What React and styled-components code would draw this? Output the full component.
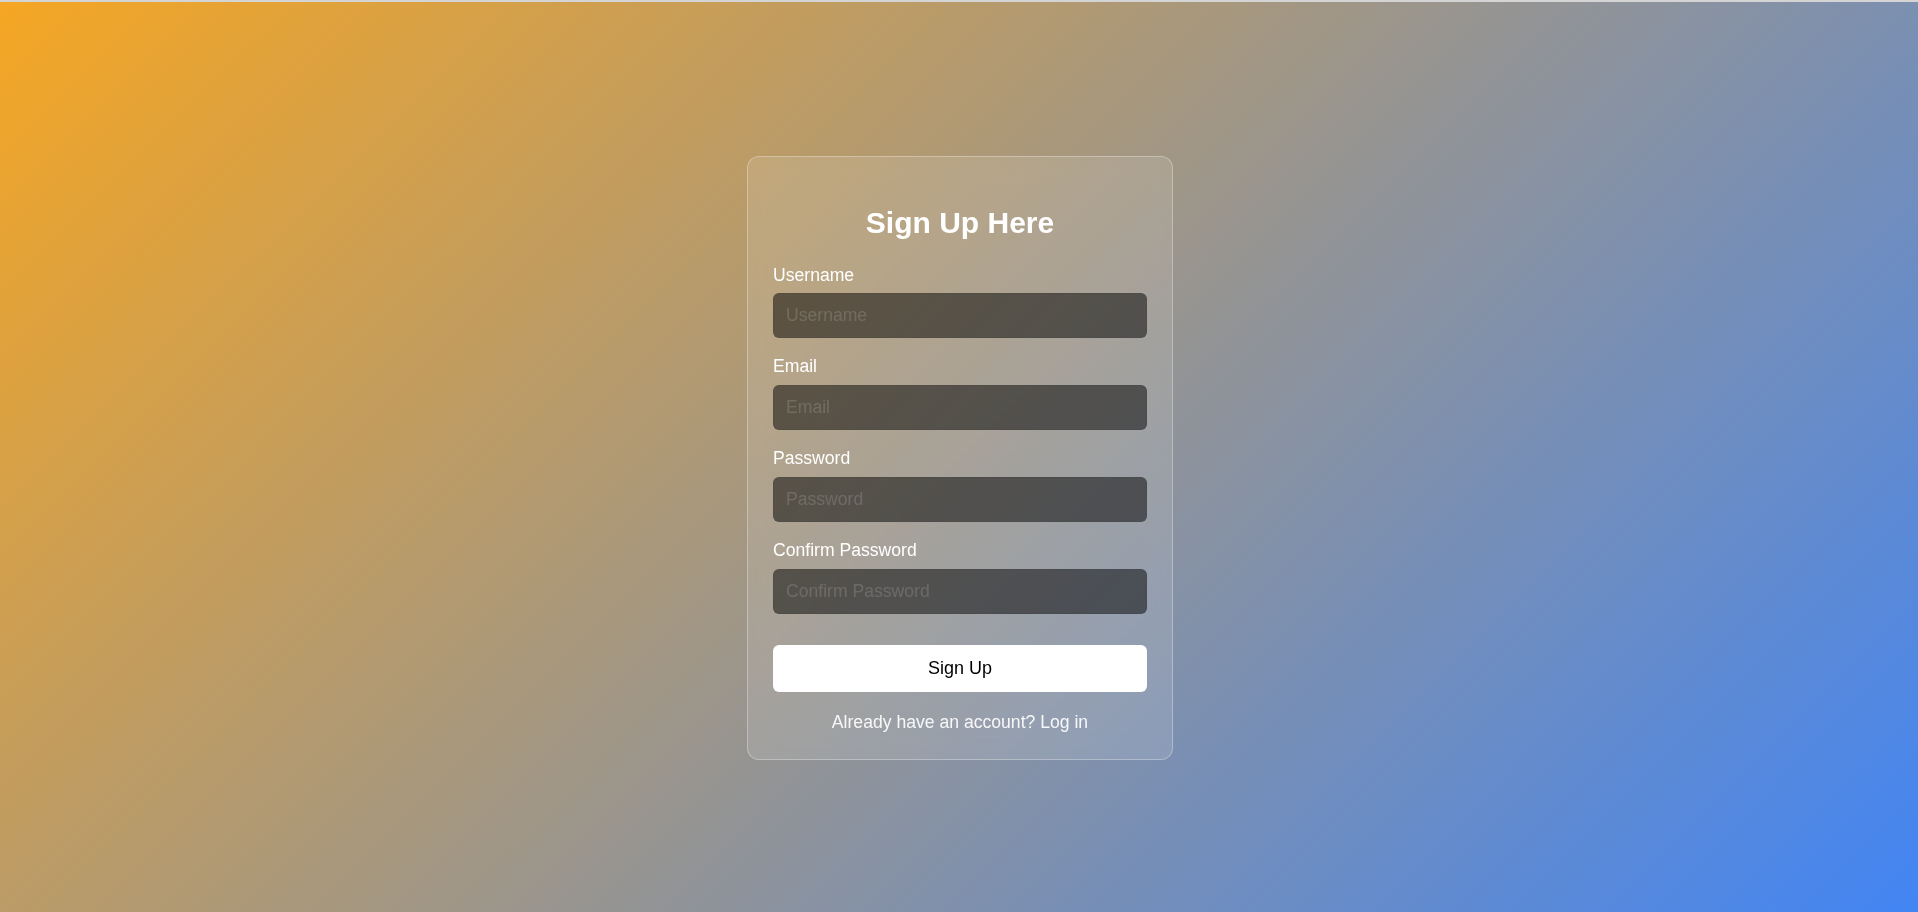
import React from 'react';
import styled, { createGlobalStyle } from 'styled-components';

const GlobalStyle = createGlobalStyle`
  * { box-sizing: border-box; }
  html, body { margin: 0; padding: 0; }
  body { font-family: "Liberation Sans", Arial, sans-serif; }
`;

const Page = styled.div`
  height: 100vh;
  border-top: 2px solid #d4d4d4;
  background: linear-gradient(135deg, #f5a623 0%, #4285f4 100%);
  display: flex;
  align-items: center;
  justify-content: center;
`;

const Card = styled.form`
  width: 426px;
  margin: 2px 0 0 2px;
  padding: 25px 25px 25.6px;
  background: rgba(255, 255, 255, 0.12);
  border: 1px solid rgba(255, 255, 255, 0.3);
  border-radius: 12px;
  backdrop-filter: blur(10px);
`;

const Title = styled.h2`
  margin: 24px 0 24.5px;
  text-align: center;
  color: #fff;
  font-size: 30px;
  font-weight: 700;
`;

const Field = styled.div`
  display: flex;
  flex-direction: column;
  margin-bottom: ${({ $last }) => ($last ? '0' : '18px')};
`;

const Label = styled.label`
  color: #fff;
  font-size: 17.6px;
  margin-bottom: 7.5px;
`;

const Input = styled.input`
  height: 45.4px;
  padding: 0 12px;
  border: 1px solid rgba(0, 0, 0, 0.05);
  border-radius: 6px;
  background: rgba(0, 0, 0, 0.5);
  color: #fff;
  font-family: inherit;
  font-size: 17.6px;
  outline: none;

  &::placeholder {
    color: rgba(255, 255, 255, 0.15);
  }
`;

const Button = styled.button`
  display: block;
  width: 100%;
  height: 47.7px;
  margin-top: 30.5px;
  border: none;
  border-radius: 6px;
  background: #fff;
  color: #000;
  font-family: inherit;
  font-size: 18px;
  cursor: pointer;
`;

const Footer = styled.p`
  margin: 20px 0 0;
  text-align: center;
  color: rgba(255, 255, 255, 0.92);
  font-size: 17.6px;
`;

const LoginLink = styled.a`
  color: inherit;
  text-decoration: none;
`;

const fields = [
  { id: 'username', label: 'Username', type: 'text' },
  { id: 'email', label: 'Email', type: 'email' },
  { id: 'password', label: 'Password', type: 'password' },
  { id: 'confirm', label: 'Confirm Password', type: 'password' },
];

const App = () => {
  return (
    <>
      <GlobalStyle />
      <Page>
        <Card onSubmit={(e) => e.preventDefault()}>
          <Title>Sign Up Here</Title>
          {fields.map((f, i) => (
            <Field key={f.id} $last={i === fields.length - 1}>
              <Label htmlFor={f.id}>{f.label}</Label>
              <Input id={f.id} type={f.type} placeholder={f.label} />
            </Field>
          ))}
          <Button type="submit">Sign Up</Button>
          <Footer>
            Already have an account? <LoginLink href="#">Log in</LoginLink>
          </Footer>
        </Card>
      </Page>
    </>
  );
};

export default App;
